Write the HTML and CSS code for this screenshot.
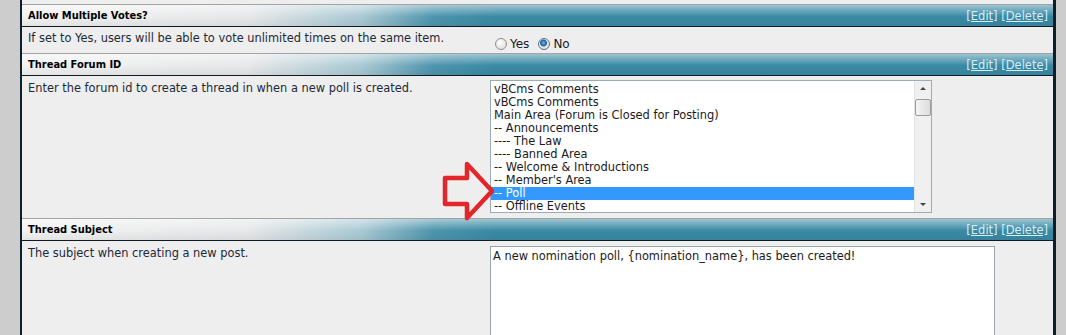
FILE: index.html
```html
<!DOCTYPE html>
<html lang="en">

<head>
  <meta charset="UTF-8">
  <title>Poll Settings</title>
  <link rel="stylesheet" href="styles.css">
</head>

<body>
  <div class="page">
    <div class="spacer"></div>

    <div class="setting-head">
      <span class="title">Allow Multiple Votes?</span>
      <span class="links"><a href="#">[Edit]</a> <a href="#">[Delete]</a></span>
    </div>
    <div class="setting-row row-votes">
      <div class="desc">If set to Yes, users will be able to vote unlimited times on the same item.</div>
      <div class="field radios">
        <label><input type="radio" name="multi"> Yes</label>
        <label><input type="radio" name="multi" checked> No</label>
      </div>
    </div>

    <div class="setting-head">
      <span class="title">Thread Forum ID</span>
      <span class="links"><a href="#">[Edit]</a> <a href="#">[Delete]</a></span>
    </div>
    <div class="setting-row row-forum">
      <div class="desc">Enter the forum id to create a thread in when a new poll is created.</div>
      <div class="field">
        <div class="listbox">
          <ul class="options">
            <li>vBCms Comments</li>
            <li>vBCms Comments</li>
            <li>Main Area (Forum is Closed for Posting)</li>
            <li>-- Announcements</li>
            <li>---- The Law</li>
            <li>---- Banned Area</li>
            <li>-- Welcome &amp; Introductions</li>
            <li>-- Member's Area</li>
            <li class="selected">-- Poll</li>
            <li>-- Offline Events</li>
          </ul>
          <div class="scrollbar">
            <span class="arrow up"></span>
            <span class="thumb"></span>
            <span class="arrow down"></span>
          </div>
        </div>
      </div>
    </div>

    <div class="setting-head">
      <span class="title">Thread Subject</span>
      <span class="links"><a href="#">[Edit]</a> <a href="#">[Delete]</a></span>
    </div>
    <div class="setting-row row-subject">
      <div class="desc">The subject when creating a new post.</div>
      <div class="field">
        <div class="textbox">A new nomination poll, {nomination_name}, has been created!</div>
      </div>
    </div>

    <svg class="pointer" width="56" height="64" viewBox="0 0 56 64">
      <path d="M5 18 L27 18 L27 4 L52 31 L27 58 L27 44 L5 44 Z" fill="none" stroke="#e3262b" stroke-width="4.5" stroke-linejoin="round" />
    </svg>
  </div>
</body>
</html>
```

FILE: styles.css
```css
:root {
  --teal: #3a8aa5;
  --row: #eeeeee;
  --border-dark: #0d1e2b;
  --text: #1c2a38;
}

body {
  margin: 0;
  background-color: #cdcdcd;
  height: 335px;
  overflow: hidden;
}

*,
body {
  font-family: Verdana, 'DejaVu Sans', sans-serif;
}

.page {
  position: relative;
  margin-left: 20px;
  width: 1031px;
  height: 335px;
  overflow: hidden;
  border-left: 2px solid var(--border-dark);
  border-right: 3px solid var(--border-dark);
  background-color: var(--row);
}

.spacer {
  height: 4px;
}

.setting-head {
  display: flex;
  justify-content: space-between;
  align-items: center;
  height: 21px;
  padding: 0 5px 0 6px;
  border-top: 1px solid #a3a3a3;
  border-bottom: 1px solid #111a20;
  background:
    linear-gradient(to bottom, rgba(255, 255, 255, 0.5), rgba(255, 255, 255, 0) 55%, rgba(0, 0, 0, 0.06)),
    linear-gradient(to right, #f2f2f2 0, #e6e8e9 22%, #a9c9d4 33%, #4d95ad 40%, var(--teal) 46%, var(--teal) 100%);
}

.title {
  font-family: Tahoma, 'DejaVu Sans Condensed', 'DejaVu Sans', sans-serif;
  font-weight: bold;
  font-size: 11px;
  color: #000;
}

.links {
  font-size: 11.5px;
}

.links a {
  color: #d8ecf4;
  text-decoration: underline;
}

.setting-row {
  display: grid;
  grid-template-columns: 466px 1fr;
}

.desc {
  padding: 5px 0 0 6px;
  font-size: 11.4px;
  color: var(--text);
}

.field {
  padding: 4px 0 0 2px;
}

.row-votes {
  height: 26px;
}

.row-votes .desc {
  padding-top: 4px;
}

.radios {
  display: flex;
  gap: 9px;
  padding: 8px 0 0 7px;
  font-size: 12px;
  color: #1a1a1a;
}

.radios label {
  display: flex;
  align-items: center;
  gap: 3px;
}

.radios input {
  appearance: none;
  margin: 0;
  width: 12px;
  height: 12px;
  border-radius: 50%;
  border: 1px solid #8f8f8f;
  background: radial-gradient(circle at 40% 35%, #ffffff, #d6d6d6);
}

.radios input:checked {
  border-color: #5a6f86;
  background:
    radial-gradient(circle at 45% 40%, #6fb6ea 0, #1f5e9c 3px, transparent 4px),
    radial-gradient(circle at 40% 35%, #ffffff, #d3d8de);
}

.row-forum {
  height: 142px;
}

.listbox {
  display: flex;
  width: 440px;
  height: 131px;
  border: 1px solid #9aacb6;
  background-color: #fff;
}

.options {
  flex: 1;
  margin: 0;
  padding: 2px 0 0 0;
  list-style: none;
  font-size: 11.4px;
  color: #1a1a1a;
}

.options li {
  height: 13px;
  line-height: 13px;
  padding-left: 3px;
  white-space: nowrap;
}

.options li.selected {
  background-color: #3399ff;
  color: #fff;
}

.scrollbar {
  position: relative;
  width: 16px;
  background-color: #f0f0f0;
  border-left: 1px solid #e4e4e4;
}

.arrow {
  position: absolute;
  left: 5px;
  width: 0;
  height: 0;
  border-left: 3px solid transparent;
  border-right: 3px solid transparent;
}

.arrow.up {
  top: 6px;
  border-bottom: 3px solid #444;
}

.arrow.down {
  bottom: 6px;
  border-top: 3px solid #444;
}

.thumb {
  position: absolute;
  top: 18px;
  left: 0;
  width: 14px;
  height: 15px;
  border: 1px solid #9b9b9b;
  border-radius: 2px;
  background: linear-gradient(to right, #f4f4f4, #dcdcdc);
}

.row-subject .field {
  padding-top: 5px;
}

.textbox {
  width: 499px;
  height: 100px;
  padding: 2px 2px;
  border: 1px solid #9aa6ad;
  background-color: #fff;
  font-size: 11.4px;
  color: #1a1a1a;
}

.pointer {
  position: absolute;
  left: 418px;
  top: 160px;
}
```
